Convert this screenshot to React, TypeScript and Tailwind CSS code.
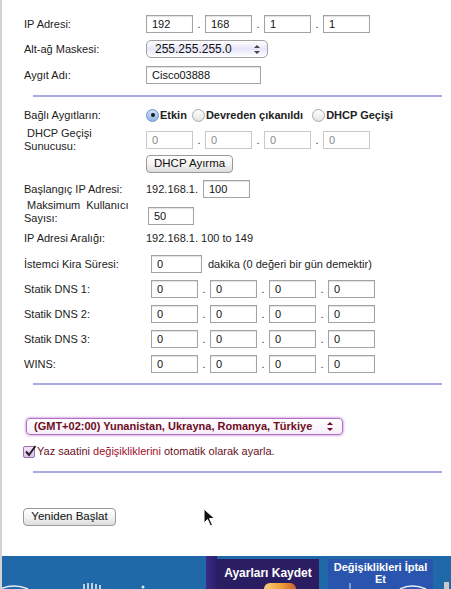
import type { ReactNode } from 'react';

const font = { fontFamily: '"Liberation Sans", Arial, Helvetica, sans-serif' };

function Field({ value, muted, w = 'w-[47px]' }: { value: string; muted?: boolean; w?: string }) {
  return (
    <div
      className={`${w} h-[18px] flex items-center pl-[5px] text-[11px] bg-white border ${
        muted ? 'border-[#c9c9c9] text-[#8a8a8a]' : 'border-[#a3a3a3] text-[#111] shadow-[inset_0_1px_1px_rgba(0,0,0,0.12)]'
      }`}
    >
      {value}
    </div>
  );
}

function IpFields({ values, muted }: { values: string[]; muted?: boolean }) {
  return (
    <div className="flex items-center">
      {values.map((v, i) => (
        <div key={i} className="flex items-center">
          {i > 0 && <span className="w-[12px] text-center text-[11px] text-[#333]">.</span>}
          <Field value={v} muted={muted} />
        </div>
      ))}
    </div>
  );
}

function Row({ label, children, className = '' }: { label: ReactNode; children?: ReactNode; className?: string }) {
  return (
    <div className={`flex items-center ${className}`}>
      <div className="w-[122px] shrink-0 text-[11px] text-[#222]">{label}</div>
      {children}
    </div>
  );
}

function Separator({ className = '' }: { className?: string }) {
  return <div className={`ml-[9px] w-[409px] h-[2px] bg-[#a9a9e8] ${className}`} />;
}

function AquaButton({ children, className = '' }: { children: ReactNode; className?: string }) {
  return (
    <div
      className={`h-[18px] flex items-center px-[7px] rounded-[4px] border border-[#9a9a9a] bg-gradient-to-b from-white via-[#f4f4f4] to-[#dcdcdc] text-[11.5px] text-[#111] ${className}`}
    >
      {children}
    </div>
  );
}

function Radio({ checked, label, className = '' }: { checked?: boolean; label: string; className?: string }) {
  return (
    <div className={`flex items-center ${className}`}>
      <span
        className={`w-[13px] h-[13px] rounded-full border flex items-center justify-center ${
          checked
            ? 'border-[#6c8fc9] bg-gradient-to-b from-[#cfe0f7] to-[#8fb3e8]'
            : 'border-[#a9a9a9] bg-gradient-to-b from-white to-[#e3e3e3]'
        }`}
      >
        {checked && <span className="w-[4px] h-[4px] rounded-full bg-[#1a1a1a]" />}
      </span>
      <span className="ml-[1px] text-[11px] font-bold text-[#222]">{label}</span>
    </div>
  );
}

function Arrows({ color = '#444' }: { color?: string }) {
  return (
    <svg width="6" height="9" viewBox="0 0 6 9">
      <path d="M3 0 L6 3 L0 3 Z" fill={color} />
      <path d="M3 9 L6 6 L0 6 Z" fill={color} />
    </svg>
  );
}

export default function App() {
  return (
    <div className="relative w-[451px] h-[589px] bg-white border-l-2 border-[#d3d3d3] flex flex-col overflow-hidden" style={font}>
      <div className="pl-[22px] pt-[15px] flex flex-col">
        <Row label="IP Adresi:" className="h-[18px]">
          <IpFields values={['192', '168', '1', '1']} />
        </Row>
        <Row label="Alt-ağ Maskesi:" className="h-[18px] mt-[7px]">
          <div className="w-[122px] h-[18px] rounded-[5px] border border-[#a0a0a0] bg-gradient-to-b from-white via-[#e6e6fa] to-white flex items-center justify-between pl-[8px] pr-[7px] text-[12px] text-[#111]">
            <span>255.255.255.0</span>
            <Arrows />
          </div>
        </Row>
        <Row label="Aygıt Adı:" className="h-[18px] mt-[8px]">
          <Field value="Cisco03888" w="w-[115px]" />
        </Row>

        <Separator className="mt-[11px]" />

        <Row label="Bağlı Aygıtların:" className="h-[16px] mt-[10px]">
          <Radio checked label="Etkin" className="mr-[5px]" />
          <Radio label="Devreden çıkanıldı" className="mr-[9px]" />
          <Radio label="DHCP Geçişi" />
        </Row>
        <Row
          label={
            <div className="leading-[13px]">
              <div className="pl-[3px]">DHCP Geçişi</div>
              <div>Sunucusu:</div>
            </div>
          }
          className="h-[18px] mt-[8px]"
        >
          <IpFields values={['0', '0', '0', '0']} muted />
        </Row>
        <div className="ml-[122px] mt-[6px] flex">
          <AquaButton className="h-[17px]">DHCP Ayırma</AquaButton>
        </div>
        <Row label="Başlangıç IP Adresi:" className="h-[18px] mt-[7px]">
          <span className="text-[11px] text-[#222] w-[57px]">192.168.1.</span>
          <Field value="100" />
        </Row>
        <div className="flex items-start h-[26px] mt-[1px]">
          <div className="w-[124px] shrink-0 text-[11px] text-[#222] leading-[13px]">
            <div className="pl-[3px]">Maksimum&nbsp; Kullanıcı</div>
            <div>Sayısı:</div>
          </div>
          <div className="mt-[8px]">
            <Field value="50" w="w-[46px]" />
          </div>
        </div>
        <Row label="IP Adresi Aralığı:" className="h-[16px] mt-[5px]">
          <span className="text-[11px] text-[#222]">192.168.1. 100 to 149</span>
        </Row>
        <Row label="İstemci Kira Süresi:" className="h-[18px] mt-[9px]">
          <div className="ml-[5px] flex items-center">
            <Field value="0" w="w-[51px]" />
            <span className="ml-[6px] text-[11px] text-[#222]">dakika (0 değeri bir gün demektir)</span>
          </div>
        </Row>
        {['Statik DNS 1:', 'Statik DNS 2:', 'Statik DNS 3:', 'WINS:'].map(l => (
          <Row key={l} label={l} className="h-[18px] mt-[7px]">
            <div className="ml-[5px]">
              <IpFields values={['0', '0', '0', '0']} />
            </div>
          </Row>
        ))}

        <Separator className="mt-[10px]" />

        <div className="mt-[33px] ml-[2px] w-[317px] h-[17px] rounded-[4px] border border-[#b46ec8] shadow-[0_0_2px_1px_rgba(190,120,210,0.55)] bg-gradient-to-b from-white to-[#f6eef8] flex items-center justify-between pl-[7px] pr-[9px] text-[11px] font-bold text-[#6e0d22]">
          <span>(GMT+02:00) Yunanistan, Ukrayna, Romanya, Türkiye</span>
          <Arrows color="#6e0d22" />
        </div>
        <div className="mt-[10px] flex items-center h-[13px] -ml-[1px]">
          <span className="w-[12px] h-[12px] rounded-[2px] border border-[#9d6fb2] bg-gradient-to-b from-[#f3e8f7] to-[#d9c3e4] relative">
            <svg className="absolute -top-[2px] left-[0px]" width="13" height="13" viewBox="0 0 13 13">
              <path d="M2 6.5 L5 10 L11.5 1" stroke="#2a1a2e" strokeWidth="2" fill="none" />
            </svg>
          </span>
          <span className="ml-[2px] text-[11px] text-[#6a0f1d]">
            Yaz saatini <span className="text-[#a0102a]">değişikliklerini</span> otomatik olarak ayarla.
          </span>
        </div>

        <Separator className="mt-[13px]" />

        <div className="mt-[35px] -ml-[1px] flex">
          <AquaButton className="w-[93px] justify-center">Yeniden Başlat</AquaButton>
        </div>
      </div>

      <div className="flex-1" />

      {/* footer bar with the save / cancel actions */}
      <div className="h-[33px] shrink-0 bg-[#1f69a8] flex relative">
        <div className="w-[204px] shrink-0 relative">
          <svg className="absolute left-0 bottom-0" width="200" height="8" viewBox="0 0 200 8">
            <path d="M-2 8 Q12 2 26 8" stroke="#e8eef6" strokeWidth="1.5" fill="none" />
            <path d="M82 8 V3 M86 8 V2 M90 8 V2 M94 8 V3 M98 8 V4" stroke="#eef2f8" strokeWidth="1.5" />
            <circle cx="141" cy="6" r="1.5" fill="#dfe7f3" />
          </svg>
        </div>
        <div className="w-[11px] shrink-0 bg-gradient-to-r from-[#3a2c88] to-[#2c1f68]" />
        <div className="w-[102px] shrink-0 mt-[3px] bg-[#2a1d62] relative flex justify-center">
          <span className="mt-[5px] text-[12px] font-bold text-white">Ayarları Kaydet</span>
          <div className="absolute bottom-0 left-[47px] w-[32px] h-[6px] rounded-t-full bg-gradient-to-r from-[#f6d27a] via-[#f2a33a] to-[#c9612e]" />
        </div>
        <div className="w-[9px] shrink-0" />
        <div className="w-[105px] shrink-0 mt-[3px] bg-[#2a55ae] relative flex flex-col items-center text-[11px] font-bold text-white leading-[12px] pt-[2px]">
          <span>Değişiklikleri İptal</span>
          <span>Et</span>
        </div>
        <div className="flex-1 relative">
          <div className="absolute right-[2px] bottom-0 w-[5px] h-[7px] bg-[#c9c9c9]" />
        </div>
        <svg className="absolute bottom-0 left-[340px]" width="100" height="8" viewBox="0 0 100 8">
          <path d="M8 8 V2" stroke="#d8dde6" strokeWidth="1" />
          <path d="M58 8 Q70 2 84 8" stroke="#e8eef6" strokeWidth="1.5" fill="none" />
        </svg>
      </div>

      {/* mouse pointer */}
      <svg className="absolute left-[201px] top-[508px]" width="14" height="20" viewBox="0 0 14 20">
        <path d="M1 1 L1 15 L4.5 11.5 L7.5 18 L9.5 17 L6.5 10.5 L11.5 10.5 Z" fill="#111" stroke="#fff" strokeWidth="1" />
      </svg>
    </div>
  );
}
